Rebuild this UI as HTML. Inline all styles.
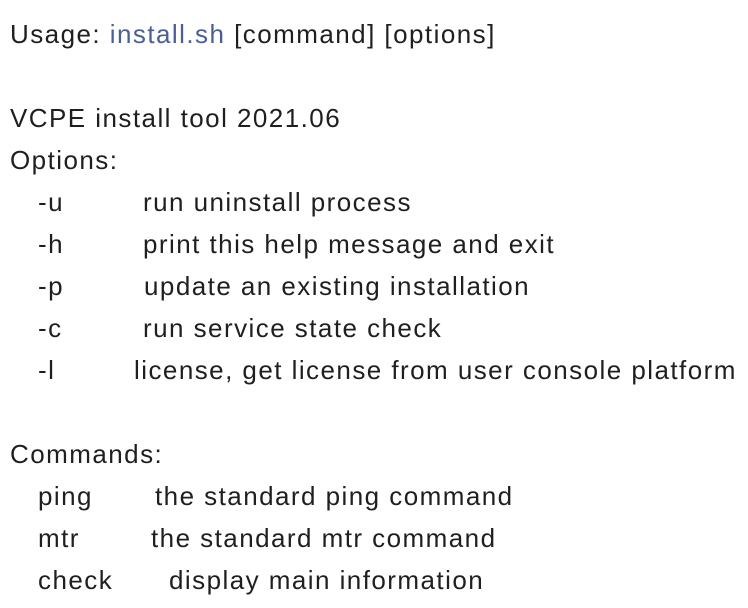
<!DOCTYPE html>
<html><head><meta charset="utf-8"><style>
html,body{margin:0;padding:0;background:#fff;width:748px;height:608px;overflow:hidden}
body{font-family:"Liberation Sans",Arial,sans-serif;font-size:26px;letter-spacing:1.45px;color:#1f1f1f;position:relative}
.l{position:absolute;line-height:42px;height:42px;white-space:nowrap;margin-top:-1px}
a{color:#4a5f93;text-decoration:none}
</style></head><body>
<div class="l" style="left:10px;top:14px">Usage: <a>install.sh</a> [command] [options]</div>
<div class="l" style="left:10px;top:98px">VCPE install tool 2021.06</div>
<div class="l" style="left:10px;top:140px">Options:</div>
<div class="l" style="left:38px;top:182px">-u</div><div class="l" style="left:143px;top:182px">run uninstall process</div>
<div class="l" style="left:38px;top:224px">-h</div><div class="l" style="left:143px;top:224px">print this help message and exit</div>
<div class="l" style="left:38px;top:266px">-p</div><div class="l" style="left:144px;top:266px">update an existing installation</div>
<div class="l" style="left:38px;top:308px">-c</div><div class="l" style="left:143px;top:308px">run service state check</div>
<div class="l" style="left:38px;top:350px">-l</div><div class="l" style="left:134px;top:350px">license, get license from user console platform</div>
<div class="l" style="left:10px;top:434px">Commands:</div>
<div class="l" style="left:38px;top:476px">ping</div><div class="l" style="left:155px;top:476px">the standard ping command</div>
<div class="l" style="left:38px;top:518px">mtr</div><div class="l" style="left:151px;top:518px">the standard mtr command</div>
<div class="l" style="left:38px;top:560px">check</div><div class="l" style="left:169px;top:560px">display main information</div>
</body></html>
